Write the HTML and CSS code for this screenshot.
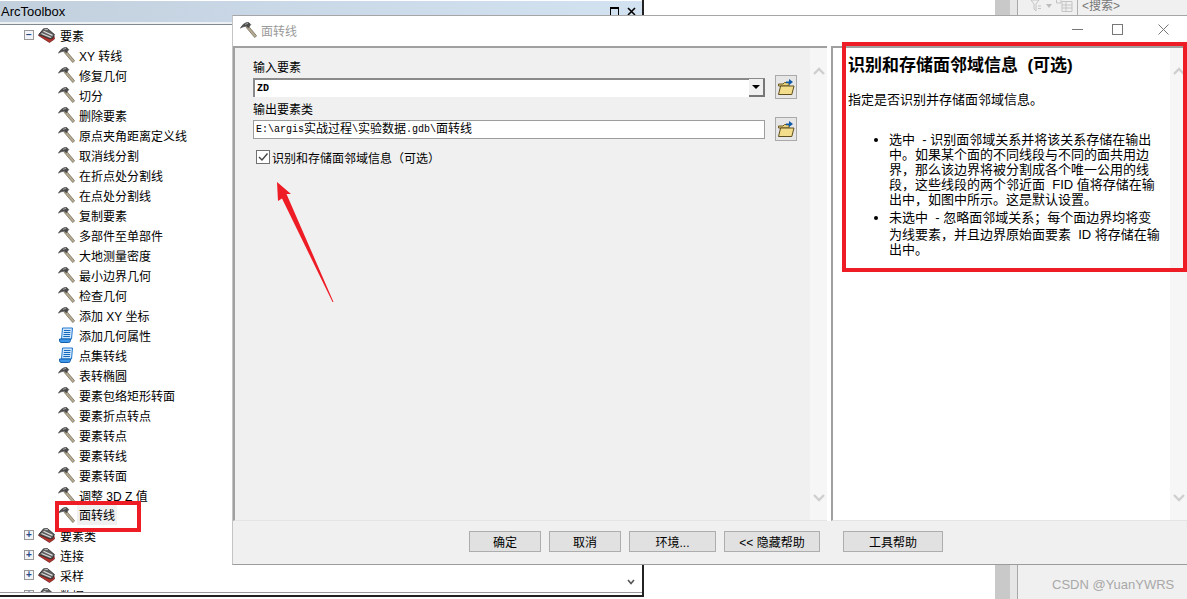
FILE: index.html
```html
<!DOCTYPE html>
<html lang="zh-CN">
<head>
    <meta charset="UTF-8">
    <title>面转线</title>
    <link rel="stylesheet" href="styles.css">
</head>
<body>
    <svg class="icon-defs" width="0" height="0">
        <symbol id="hammer" viewBox="0 0 17 16">
            <path d="M6.2 5.4 L8.2 3.8 L16.6 13.8 L14.8 15.6 Z" fill="#b5ab93" stroke="#77705f" stroke-width=".8"/>
            <path d="M0.4 6.2 C2.2 2.6 5 .4 8.4 .2 L10.8 2.6 L8.4 5.8 L6.8 4.4 C4.6 4.2 2.6 5 0.4 6.2 Z" fill="#4c4c4c" stroke="#333" stroke-width=".5"/>
            <path d="M5 2.4 L8 1.4" stroke="#a5a5a5" stroke-width="1"/>
        </symbol>
        <symbol id="toolbox" viewBox="0 0 17 15">
            <path d="M0.5 7.5 L11.5 14.5 L16.5 11 L16 8 L4 3 Z" fill="#b8322c" stroke="#5d1a18" stroke-width=".7"/>
            <path d="M0.8 6.5 L5.5 .8 L9.5 .6 L16.5 6.5 L14.5 10.5 L12 11 Z" fill="#5c5c5c" stroke="#222" stroke-width=".7"/>
            <path d="M3.5 5.5 L13 9.5 M5.5 3.2 L14.5 7.4" stroke="#dcdcdc" stroke-width="1.2"/>
            <path d="M6.5 1.6 L10 1.6" stroke="#bbb" stroke-width="1"/>
        </symbol>
        <symbol id="script" viewBox="0 0 16 16">
            <path d="M4 1 H14 L13 12 H3 Z" fill="#cfe5fb" stroke="#1f78d0"/>
            <path d="M1 12 H12 C12 15 11 15.5 10 15.5 H2.5 C1 15.5 1 13 1 12 Z" fill="#3f97e8" stroke="#135fae"/>
            <path d="M5.5 3.5 H12 M5.3 5.5 H11.8 M5 7.5 H11.6 M4.8 9.5 H11.4" stroke="#1469bd" stroke-width="1"/>
        </symbol>
        <symbol id="folder" viewBox="0 0 18 18">
            <path d="M1.5 6 H6 L7.5 4.5 H12 V8 H1.5 Z" fill="#e8cf7c" stroke="#6d5a22"/>
            <path d="M1.5 16.5 L3.6 8 H17 L14.8 16.5 Z" fill="#f2dd8c" stroke="#5f4f1e"/>
            <path d="M9 3.5 H12 V1 L16 4 L12 7 V5.2 H9 Z" fill="#0f5aa8"/>
        </symbol>
        <symbol id="chevron-up" viewBox="0 0 12 8">
            <path d="M1 7 L6 2 L11 7" fill="none" stroke="#cfcfcf" stroke-width="2.4"/>
        </symbol>
        <symbol id="chevron-down" viewBox="0 0 12 8">
            <path d="M1 1 L6 6 L11 1" fill="none" stroke="#cfcfcf" stroke-width="2.4"/>
        </symbol>
    </svg>

    <div class="desktop">
        <!-- 右侧目录面板 -->
        <div class="catalog">
            <div class="catalog-gutter"></div>
            <div class="catalog-body">
                <div class="catalog-toolbar">
                    <div class="catalog-tools">
                        <svg width="12" height="12" viewBox="0 0 12 12"><path d="M1 0 H9 L6 4 V11 L4 9 V4 Z M8 6 H11 M8 8.5 H11" fill="none" stroke="#c4c4c4"/></svg>
                        <svg width="6" height="4" viewBox="0 0 6 4"><path d="M0 0 H6 L3 4 Z" fill="#bdbdbd"/></svg>
                        <svg width="17" height="13" viewBox="0 0 17 13"><path d="M.5 .5 H5 V4 H.5 Z M6 2.5 H16 V12.5 H6 Z M6 6 H16 M6 9 H16 M10 2.5 V12.5" fill="none" stroke="#c4c4c4"/></svg>
                    </div>
                    <span class="catalog-search">&lt;搜索&gt;</span>
                </div>
            </div>
        </div>

        <!-- ArcToolbox 窗口 -->
        <div class="toolbox">
            <div class="toolbox-title">
                <span>ArcToolbox</span>
                <div class="toolbox-controls">
                    <span class="restore-box"></span>
                    <svg width="9" height="9" viewBox="0 0 9 9"><path d="M1 1 L8 8 M8 1 L1 8" stroke="#000" stroke-width="1.6"/></svg>
                </div>
            </div>
            <div class="tree">
                <div class="tree-row group"><span class="expander">−</span><svg class="tree-icon"><use href="#toolbox"/></svg><span>要素</span></div>
                <div class="tree-row tool"><svg class="tree-icon"><use href="#hammer"/></svg><span>XY 转线</span></div>
                <div class="tree-row tool"><svg class="tree-icon"><use href="#hammer"/></svg><span>修复几何</span></div>
                <div class="tree-row tool"><svg class="tree-icon"><use href="#hammer"/></svg><span>切分</span></div>
                <div class="tree-row tool"><svg class="tree-icon"><use href="#hammer"/></svg><span>删除要素</span></div>
                <div class="tree-row tool"><svg class="tree-icon"><use href="#hammer"/></svg><span>原点夹角距离定义线</span></div>
                <div class="tree-row tool"><svg class="tree-icon"><use href="#hammer"/></svg><span>取消线分割</span></div>
                <div class="tree-row tool"><svg class="tree-icon"><use href="#hammer"/></svg><span>在折点处分割线</span></div>
                <div class="tree-row tool"><svg class="tree-icon"><use href="#hammer"/></svg><span>在点处分割线</span></div>
                <div class="tree-row tool"><svg class="tree-icon"><use href="#hammer"/></svg><span>复制要素</span></div>
                <div class="tree-row tool"><svg class="tree-icon"><use href="#hammer"/></svg><span>多部件至单部件</span></div>
                <div class="tree-row tool"><svg class="tree-icon"><use href="#hammer"/></svg><span>大地测量密度</span></div>
                <div class="tree-row tool"><svg class="tree-icon"><use href="#hammer"/></svg><span>最小边界几何</span></div>
                <div class="tree-row tool"><svg class="tree-icon"><use href="#hammer"/></svg><span>检查几何</span></div>
                <div class="tree-row tool"><svg class="tree-icon"><use href="#hammer"/></svg><span>添加 XY 坐标</span></div>
                <div class="tree-row tool"><svg class="tree-icon"><use href="#script"/></svg><span>添加几何属性</span></div>
                <div class="tree-row tool"><svg class="tree-icon"><use href="#script"/></svg><span>点集转线</span></div>
                <div class="tree-row tool"><svg class="tree-icon"><use href="#hammer"/></svg><span>表转椭圆</span></div>
                <div class="tree-row tool"><svg class="tree-icon"><use href="#hammer"/></svg><span>要素包络矩形转面</span></div>
                <div class="tree-row tool"><svg class="tree-icon"><use href="#hammer"/></svg><span>要素折点转点</span></div>
                <div class="tree-row tool"><svg class="tree-icon"><use href="#hammer"/></svg><span>要素转点</span></div>
                <div class="tree-row tool"><svg class="tree-icon"><use href="#hammer"/></svg><span>要素转线</span></div>
                <div class="tree-row tool"><svg class="tree-icon"><use href="#hammer"/></svg><span>要素转面</span></div>
                <div class="tree-row tool"><svg class="tree-icon"><use href="#hammer"/></svg><span>调整 3D Z 值</span></div>
                <div class="tree-row tool selected"><svg class="tree-icon"><use href="#hammer"/></svg><span>面转线</span></div>
                <div class="tree-row group"><span class="expander">+</span><svg class="tree-icon"><use href="#toolbox"/></svg><span>要素类</span></div>
                <div class="tree-row group"><span class="expander">+</span><svg class="tree-icon"><use href="#toolbox"/></svg><span>连接</span></div>
                <div class="tree-row group"><span class="expander">+</span><svg class="tree-icon"><use href="#toolbox"/></svg><span>采样</span></div>
                <div class="tree-row group"><span class="expander">+</span><svg class="tree-icon"><use href="#toolbox"/></svg><span>数据</span></div>
            </div>
            <svg class="tree-scroll-down" width="8" height="6" viewBox="0 0 8 6"><path d="M1 1 L4 4.5 L7 1" fill="none" stroke="#555" stroke-width="1.6"/></svg>
        </div>
        <div class="mark mark-tree"></div>

        <!-- 面转线 对话框 -->
        <div class="dialog">
            <div class="dialog-title">
                <svg class="title-icon"><use href="#hammer"/></svg>
                <span class="title-text">面转线</span>
                <div class="window-controls">
                    <span class="win-min"></span>
                    <span class="win-max"></span>
                    <svg width="11" height="11" viewBox="0 0 11 11"><path d="M.5 .5 L10.5 10.5 M10.5 .5 L.5 10.5" stroke="#777" stroke-width="1"/></svg>
                </div>
            </div>
            <div class="dialog-body">
                <div class="form-panel">
                    <div class="form-content">
                        <label class="field-label">输入要素</label>
                        <div class="field-row">
                            <div class="field combo">
                                <span class="latin">ZD</span>
                                <span class="combo-btn"></span>
                            </div>
                            <button class="folder-btn"><svg width="18" height="18"><use href="#folder"/></svg></button>
                        </div>
                        <label class="field-label">输出要素类</label>
                        <div class="field-row">
                            <div class="field"><span class="latin">E:\argis</span>实战过程<span class="latin">\</span>实验数据<span class="latin">.gdb\</span>面转线</div>
                            <button class="folder-btn"><svg width="18" height="18"><use href="#folder"/></svg></button>
                        </div>
                        <div class="check-row">
                            <span class="checkbox"><svg width="12" height="12" viewBox="0 0 12 12"><path d="M2 6 L5 9 L10.5 2.5" fill="none" stroke="#444" stroke-width="1.4"/></svg></span>
                            <span>识别和存储面邻域信息（可选）</span>
                        </div>
                    </div>
                    <div class="panel-scroll">
                        <svg width="12" height="8"><use href="#chevron-up"/></svg>
                        <svg width="12" height="8"><use href="#chevron-down"/></svg>
                    </div>
                </div>
                <div class="help-panel">
                    <div class="help-content">
                        <h2 class="help-title">识别和存储面邻域信息  (可选)</h2>
                        <p class="help-intro">指定是否识别并存储面邻域信息。</p>
                        <ul class="help-list">
                            <li>
                                <span class="ln">选中  - 识别面邻域关系并将该关系存储在输出</span>
                                <span class="ln">中。如果某个面的不同线段与不同的面共用边</span>
                                <span class="ln">界，那么该边界将被分割成各个唯一公用的线</span>
                                <span class="ln">段，这些线段的两个邻近面  FID 值将存储在输</span>
                                <span class="ln">出中，如图中所示。这是默认设置。</span>
                            </li>
                            <li>
                                <span class="ln">未选中  - 忽略面邻域关系；每个面边界均将变</span>
                                <span class="ln ln-tall">为线要素，并且边界原始面要素  ID 将存储在输</span>
                                <span class="ln">出中。</span>
                            </li>
                        </ul>
                    </div>
                    <div class="panel-scroll">
                        <svg width="12" height="8"><use href="#chevron-up"/></svg>
                        <svg width="12" height="8"><use href="#chevron-down"/></svg>
                    </div>
                </div>
            </div>
            <div class="dialog-footer">
                <button class="btn btn-ok">确定</button>
                <button class="btn btn-cancel">取消</button>
                <button class="btn btn-env">环境...</button>
                <button class="btn btn-hide">&lt;&lt; 隐藏帮助</button>
                <button class="btn btn-help">工具帮助</button>
            </div>
        </div>

        <!-- 标注 -->
        <div class="mark mark-help"></div>
        <svg class="mark-arrow" width="70" height="130" viewBox="0 0 70 130">
            <path d="M2 2 L16 14 L11.5 14 L58.5 122 L57.5 122 L7 18.5 L3 21 Z" fill="#ee1c25"/>
        </svg>
        <div class="watermark">CSDN @YuanYWRS</div>
    </div>
</body>
</html>
```

FILE: styles.css
```css
* {
    box-sizing: border-box;
}
html, body {
    margin: 0;
    padding: 0;
    background: #fff;
}
body {
    font-family: "Liberation Sans", "Noto Sans CJK SC", sans-serif;
    font-size: 12px;
    color: #000;
    overflow: hidden;
}
.icon-defs {
    position: absolute;
}
.desktop {
    position: relative;
    width: 1187px;
    height: 599px;
    overflow: hidden;
    background: #fff;
}

/* 右侧目录面板 */
.catalog {
    position: absolute;
    left: 995px;
    top: 0;
    right: 0;
    bottom: 0;
    display: flex;
}
.catalog-gutter {
    width: 22px;
    background: #c9c9c9;
    border-right: 7px solid #e6e6e6;
}
.catalog-body {
    flex: 1;
    background: #f0f0f0;
    border-left: 1px solid #a8a8a8;
}
.catalog-toolbar {
    display: flex;
    height: 15px;
    line-height: 12px;
}
.catalog-tools {
    display: flex;
    align-items: center;
    gap: 4px;
    width: 60px;
    padding: 0 2px 4px 12px;
    border-right: 1px solid #b0b0b0;
}
.catalog-search {
    padding-left: 4px;
    color: #777;
}

/* ArcToolbox 窗口 */
.toolbox {
    position: absolute;
    left: 0;
    top: 0;
    width: 644px;
    height: 597px;
    background: #fff;
    border-right: 2px solid #222;
    border-bottom: 2px solid #222;
}
.toolbox-title {
    display: flex;
    justify-content: space-between;
    align-items: center;
    height: 24px;
    padding: 0 5px 3px 1px;
    margin-top: 1px;
    font-size: 13px;
    background: linear-gradient(90deg, #c2d0de, #d3e2f1);
    border-bottom: 1px solid #808890;
    box-shadow: inset 0 -2px 0 #eef1f4;
}
.toolbox-controls {
    display: flex;
    align-items: center;
    gap: 8px;
    margin-right: 1px;
}
.restore-box {
    width: 9px;
    height: 9px;
    border: 1px solid #000;
    border-top-width: 2px;
}
.tree {
    height: 568px;
    overflow: hidden;
    border-bottom: 1px solid #9a9a9a;
}
.tree-row {
    display: flex;
    align-items: center;
    height: 20px;
    white-space: nowrap;
}
.tree-row.group {
    padding-left: 24px;
}
.tree-row.tool {
    padding-left: 58px;
}
.tree-row.selected span {
    height: 20px;
    background: #f0f0f0;
    margin-left: -2px;
    padding: 0 2px;
    line-height: 22px;
}
.expander {
    width: 10px;
    height: 10px;
    margin-right: 4px;
    border: 1px solid #9a9a9a;
    background: #f2f4f8;
    color: #2a4a8a;
    font: bold 10px/8px "Liberation Sans", sans-serif;
    text-align: center;
}
.group .tree-icon {
    width: 17px;
    height: 15px;
    margin-right: 5px;
}
.tool .tree-icon {
    width: 17px;
    height: 16px;
    margin-right: 4px;
}
.tree-scroll-down {
    position: absolute;
    right: 7px;
    bottom: 10px;
}

/* 面转线 对话框 */
.dialog {
    position: absolute;
    left: 232px;
    top: 15px;
    right: 0;
    height: 550px;
    display: flex;
    flex-direction: column;
    background: #fff;
    border-top: 1px solid #a6a6a6;
    border-bottom: 1px solid #9c9c9c;
    border-left: 1px solid #c4c4c4;
}
.dialog-title {
    display: flex;
    align-items: center;
    height: 30px;
    padding: 0 0 2px 7px;
}
.title-icon {
    width: 17px;
    height: 16px;
}
.title-text {
    margin-left: 4px;
    color: #9a9a9a;
}
.window-controls {
    display: flex;
    align-items: center;
    margin-left: auto;
    padding: 0 18px 2px 0;
}
.win-min {
    width: 11px;
    height: 1px;
    margin-right: 29px;
    background: #777;
}
.win-max {
    width: 11px;
    height: 11px;
    margin-right: 35px;
    border: 1px solid #777;
}
.dialog-body {
    display: flex;
    gap: 4px;
    height: 475px;
}
.form-panel {
    display: flex;
    width: 594px;
    background: #f0f0f0;
    border-top: 2px solid #a0a0a0;
    border-left: 2px solid #a0a0a0;
    border-bottom: 1px solid #e4e4e4;
}
.form-content {
    flex: 1;
    padding: 11px 0 0 18px;
}
.panel-scroll {
    display: flex;
    flex-direction: column;
    justify-content: space-between;
    align-items: center;
    flex: none;
    width: 17px;
    padding: 19px 0 18px;
    background: #f6f6f6;
}
.field-label {
    display: block;
    height: 15px;
    line-height: 18px;
    margin-bottom: 1px;
}
.field-row {
    display: flex;
    align-items: center;
    gap: 10px;
    height: 24px;
    margin-bottom: 2px;
}
.field {
    position: relative;
    display: flex;
    align-items: center;
    width: 512px;
    height: 19px;
    padding-left: 2px;
    background: #fff;
    border: 1px solid #9d9d9d;
    white-space: pre;
    line-height: 17px;
}
.field.combo {
    border-left: 2px solid #8a8a8a;
    border-top: 2px solid #8a8a8a;
    border-right: none;
    border-bottom: none;
}
.latin {
    font-family: "Liberation Mono", monospace;
    font-size: 10px;
}
.combo .latin {
    font-weight: bold;
}
.combo-btn {
    position: absolute;
    right: 0;
    top: -1px;
    width: 16px;
    height: 18px;
    background: #f0f0f0;
    border-right: 2px solid #777;
    border-bottom: 2px solid #777;
}
.combo-btn::after {
    content: "";
    position: absolute;
    left: 3px;
    top: 6px;
    border-top: 4px solid #000;
    border-left: 4px solid transparent;
    border-right: 4px solid transparent;
}
.folder-btn {
    display: flex;
    align-items: center;
    justify-content: center;
    width: 22px;
    height: 24px;
    padding: 0;
    background: #e6e6e6;
    border: 1px solid #a9a9a9;
}
.check-row {
    display: flex;
    align-items: center;
    gap: 2px;
    margin-top: 8px;
    margin-left: 3px;
    height: 16px;
}
.checkbox {
    display: flex;
    align-items: center;
    justify-content: center;
    width: 14px;
    height: 14px;
    background: #fff;
    border: 1px solid #707070;
}

/* 帮助面板 */
.help-panel {
    flex: 1;
    display: flex;
    background: #fff;
    border-top: 2px solid #a0a0a0;
    border-left: 2px solid #a0a0a0;
    border-bottom: 1px solid #e4e4e4;
}
.help-content {
    flex: 1;
    padding: 8px 0 0 15px;
    white-space: nowrap;
}
.help-title {
    margin: 0;
    font-size: 17px;
    line-height: 20px;
    font-weight: bold;
    white-space: pre;
}
.help-intro {
    margin: 16px 0 0;
    font-size: 13px;
    line-height: 16px;
}
.help-list {
    margin: 24px 0 0;
    padding: 0 0 0 41px;
    font-size: 13px;
}
.help-list li {
    margin-bottom: 3px;
}
.ln {
    display: block;
    line-height: 15px;
    white-space: pre;
}
.ln-tall {
    padding-top: 2px;
}

/* 底部按钮 */
.dialog-footer {
    display: flex;
    flex: 1;
    gap: 8px;
    padding: 10px 0 0 236px;
    background: #f0f0f0;
}
.btn {
    height: 21px;
    padding: 0;
    background: #e1e1e1;
    border: 1px solid #adadad;
    font: 12px "Liberation Sans", "Noto Sans CJK SC", sans-serif;
    color: #000;
}
.btn-ok, .btn-cancel {
    width: 72px;
}
.btn-env {
    width: 87px;
}
.btn-hide {
    width: 96px;
}
.btn-help {
    width: 100px;
    margin-left: 15px;
}

/* 红色标注 */
.mark {
    position: absolute;
    border: 4px solid #ee1c25;
}
.mark-tree {
    left: 55px;
    top: 501px;
    width: 86px;
    height: 31px;
}
.mark-help {
    left: 842px;
    top: 42px;
    width: 345px;
    height: 230px;
}
.mark-arrow {
    position: absolute;
    left: 275px;
    top: 180px;
}
.watermark {
    position: absolute;
    left: 1052px;
    top: 576px;
    font-family: "Liberation Sans", sans-serif;
    font-size: 13px;
    line-height: 18px;
    color: #a8a8a8;
}
```
